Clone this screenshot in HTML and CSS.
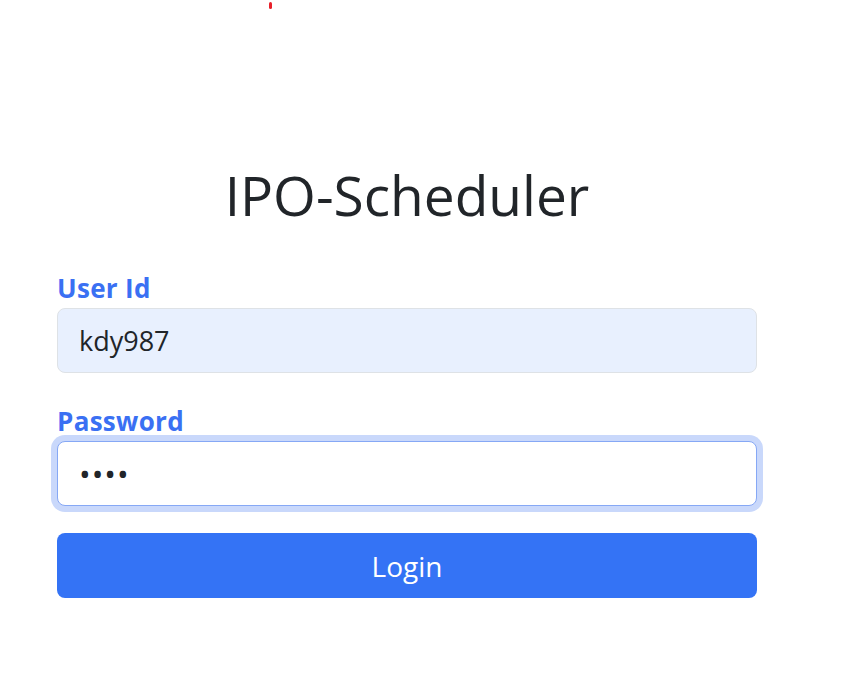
FILE: index.html
```html
<!DOCTYPE html>
<html>
<head>
<meta charset="utf-8">
<link rel="stylesheet" href="styles.css">
</head>
<body>
<span class="dot"></span>
<main class="login">
  <h1 class="title">IPO-Scheduler</h1>
  <form class="form">
    <div class="field">
      <label class="label" for="uid">User Id</label>
      <input class="input autofill" id="uid" type="text" value="kdy987">
    </div>
    <div class="field">
      <label class="label" for="pw">Password</label>
      <input class="input focused" id="pw" type="password" value="1234">
    </div>
    <button class="btn" type="button">Login</button>
  </form>
</main>
</body>
</html>
```
FILE: styles.css
```css
* { box-sizing: border-box; }
body {
  margin: 0;
  font-family: "Open Sans", "Noto Sans", sans-serif;
  color: #212529;
  background: #fff;
  position: relative;
}
.dot {
  position: absolute;
  left: 269px;
  top: 2px;
  width: 3px;
  height: 7px;
  border-radius: 2px;
  background: #e8202a;
}
.login {
  width: 700px;
  margin-left: 57px;
  padding-top: 162px;
}
.title {
  margin: 0;
  text-align: center;
  font-weight: 400;
  font-size: 55px;
  line-height: 65px;
}
.form {
  margin-top: 43px;
  display: flex;
  flex-direction: column;
  gap: 27px;
}
.field {
  display: flex;
  flex-direction: column;
}
.field + .field { margin-top: 3px; }
.label {
  color: #3a70f3;
  font-weight: 700;
  font-size: 26px;
  line-height: 36px;
  margin-bottom: 2px;
  letter-spacing: 0.3px;
}
.input {
  height: 65px;
  border: 1px solid #dee2e6;
  border-radius: 8px;
  padding: 0 21px;
  font-family: inherit;
  font-size: 27px;
  color: #212529;
  background: #fff;
  outline: none;
}
.input.autofill { background: #e8f0fe; }
.input.focused {
  border-color: #86a8f5;
  box-shadow: 0 0 0 6px #c9d8fb;
  font-size: 31px;
  letter-spacing: 1px;
}
.btn {
  height: 65px;
  border: 0;
  border-radius: 8px;
  background: #3473f5;
  color: #fff;
  font-family: inherit;
  font-size: 28px;
}
```
